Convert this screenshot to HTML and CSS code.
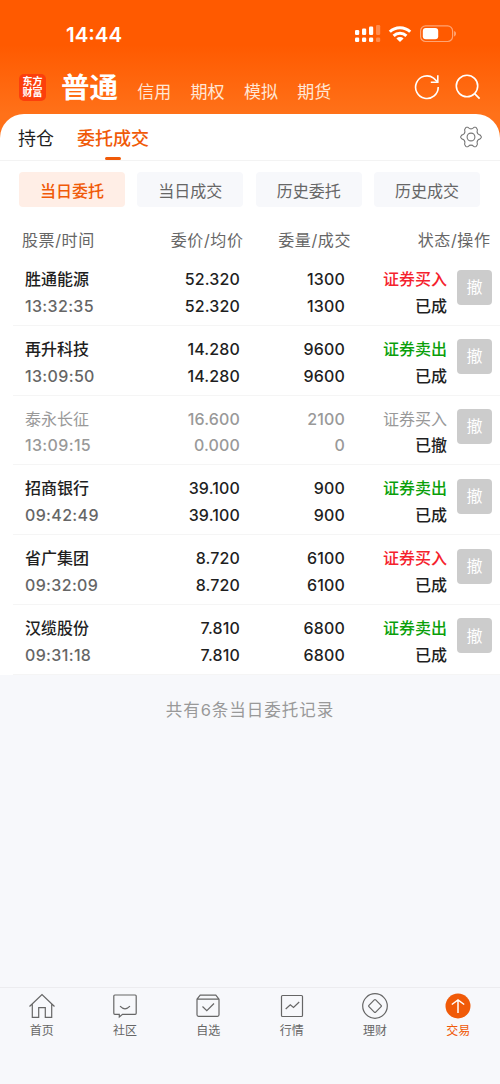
FILE: index.html
```html
<!DOCTYPE html>
<html lang="zh-CN">
<head>
  <meta charset="UTF-8">
  <meta name="viewport" content="width=device-width, initial-scale=1.0">
  <title>委托成交</title>
  <link rel="stylesheet" href="styles.css">
</head>
<body>
  <header>
    <div class="status-bar">
      <div class="time">14:44</div>
      <div class="status-icons">
        <svg class="signal" width="26" height="18" viewBox="0 0 26 18" fill="#fff">
          <rect x="0" y="5" width="4.2" height="5" rx="1.2"/>
          <rect x="7" y="3.5" width="4.2" height="6.5" rx="1.2"/>
          <rect x="14" y="1.5" width="4.2" height="8.5" rx="1.2"/>
          <rect x="21" y="0" width="4.2" height="10" rx="1.2" opacity=".3"/>
          <rect x="0" y="12.5" width="4.2" height="4.5" rx="1.2"/>
          <rect x="7" y="12.5" width="4.2" height="4.5" rx="1.2"/>
          <rect x="14" y="12.5" width="4.2" height="4.5" rx="1.2"/>
          <rect x="21" y="12.5" width="4.2" height="4.5" rx="1.2" opacity=".3"/>
        </svg>
        <svg class="wifi" width="24" height="18" viewBox="0 0 24 18" fill="none" stroke="#fff" stroke-width="3">
          <path d="M1.8 6.8a14.6 14.6 0 0 1 20.4 0"/>
          <path d="M5.6 10.8a9.2 9.2 0 0 1 12.8 0"/>
          <path d="M12 17l-3.6-3.6a5.2 5.2 0 0 1 7.2 0z" fill="#fff" stroke="none"/>
        </svg>
        <svg class="battery" width="37" height="18" viewBox="0 0 37 18">
          <rect x=".6" y=".9" width="32" height="15.6" rx="5" fill="none" stroke="#fff" stroke-opacity=".45" stroke-width="1.2"/>
          <rect x="2.8" y="3.1" width="15.4" height="11.2" rx="3" fill="#fff"/>
          <path d="M34.2 6v5.4c1.2-.5 1.7-1.5 1.7-2.7s-.5-2.2-1.7-2.7z" fill="#fff" fill-opacity=".5"/>
        </svg>
      </div>
    </div>
    <div class="title-bar">
      <div class="logo">东方<br>财富</div>
      <nav>
        <a class="current">普通</a>
        <a>信用</a>
        <a>期权</a>
        <a>模拟</a>
        <a>期货</a>
      </nav>
      <div class="tools">
        <svg width="26" height="26" viewBox="0 0 26 26" fill="none" stroke="#fff" stroke-width="1.6">
          <path d="M24.2 13A11.3 11.3 0 1 1 19.6 4.1L23.5 7.8"/>
          <path d="M23.8 1.2v7h-7"/>
        </svg>
        <svg width="26" height="26" viewBox="0 0 26 26" fill="none" stroke="#fff" stroke-width="1.6">
          <circle cx="12" cy="12" r="10.7"/>
          <path d="M19.6 19.6l5 5"/>
        </svg>
      </div>
    </div>
  </header>

  <main>
    <div class="tabs">
      <a>持仓</a>
      <a class="active">委托成交</a>
      <svg class="gear" width="22" height="22" viewBox="0 0 22 22" fill="none" stroke="#777" stroke-width="1.1" stroke-linejoin="round">
        <path d="M6.500 1.200h1.200q.5 0 .8.500c1 1.600 4 1.600 5 0q.3-.5.8-.5h1.200q.5 0 .8.500l1 1.800q.2.400 0 .9c-.5 1.900.7 3.900 2.500 4.500q.4.100.6.500l.8 1.100q.3.500 0 1l-.8 1.100q-.2.400-.6.500c-1.800.6-3 2.600-2.500 4.500q.2.500 0 .9l-1 1.800q-.3.500-.8.500h-1.200q-.5 0-.8-.5c-1-1.600-4-1.600-5 0q-.3.500-.8.500H6.500q-.5 0-.8-.5l-1-1.800q-.2-.4 0-.9c.5-1.900-.7-3.900-2.500-4.500q-.4-.1-.6-.5l-.8-1.100q-.3-.5 0-1l.8-1.100q.2-.4.600-.5c1.800-.6 3-2.600 2.500-4.500q-.2-.5 0-.9l1-1.800q.3-.5.800-.5z"/>
        <circle cx="11" cy="11" r="3.900"/>
      </svg>
    </div>

    <div class="filters">
      <button class="selected">当日委托</button>
      <button>当日成交</button>
      <button>历史委托</button>
      <button>历史成交</button>
    </div>

    <div class="list-head">
      <span>股票/时间</span>
      <span>委价/均价</span>
      <span>委量/成交</span>
      <span>状态/操作</span>
    </div>

    <div class="orders">
      <div class="order">
        <div class="stock"><b>胜通能源</b><span>13:32:35</span></div>
        <div class="price"><span>52.320</span><span>52.320</span></div>
        <div class="amount"><span>1300</span><span>1300</span></div>
        <div class="state"><span class="buy">证券买入</span><span>已成</span></div>
        <button class="cancel">撤</button>
      </div>
      <div class="order">
        <div class="stock"><b>再升科技</b><span>13:09:50</span></div>
        <div class="price"><span>14.280</span><span>14.280</span></div>
        <div class="amount"><span>9600</span><span>9600</span></div>
        <div class="state"><span class="sell">证券卖出</span><span>已成</span></div>
        <button class="cancel">撤</button>
      </div>
      <div class="order revoked">
        <div class="stock"><b>泰永长征</b><span>13:09:15</span></div>
        <div class="price"><span>16.600</span><span>0.000</span></div>
        <div class="amount"><span>2100</span><span>0</span></div>
        <div class="state"><span>证券买入</span><span class="done">已撤</span></div>
        <button class="cancel">撤</button>
      </div>
      <div class="order">
        <div class="stock"><b>招商银行</b><span>09:42:49</span></div>
        <div class="price"><span>39.100</span><span>39.100</span></div>
        <div class="amount"><span>900</span><span>900</span></div>
        <div class="state"><span class="sell">证券卖出</span><span>已成</span></div>
        <button class="cancel">撤</button>
      </div>
      <div class="order">
        <div class="stock"><b>省广集团</b><span>09:32:09</span></div>
        <div class="price"><span>8.720</span><span>8.720</span></div>
        <div class="amount"><span>6100</span><span>6100</span></div>
        <div class="state"><span class="buy">证券买入</span><span>已成</span></div>
        <button class="cancel">撤</button>
      </div>
      <div class="order">
        <div class="stock"><b>汉缆股份</b><span>09:31:18</span></div>
        <div class="price"><span>7.810</span><span>7.810</span></div>
        <div class="amount"><span>6800</span><span>6800</span></div>
        <div class="state"><span class="sell">证券卖出</span><span>已成</span></div>
        <button class="cancel">撤</button>
      </div>
    </div>
  </main>

  <p class="total">共有6条当日委托记录</p>

  <footer>
    <a>
      <svg width="28" height="28" viewBox="0 0 28 28">
        <path d="M1.500 14.500L14 2.500l12.500 12M4.300 12v13.300h6.400v-9.600h6.600v9.600h6.400V12"/>
      </svg>
      首页
    </a>
    <a>
      <svg width="28" height="28" viewBox="0 0 28 28">
        <path d="M3.800 3h20.400q1 0 1 1v17.300q0 1-1 1H11.500L8.300 25v-2.700H3.800q-1 0-1-1V4q0-1 1-1z"/>
        <path d="M9 14.200q5 5.200 10 0"/>
      </svg>
      社区
    </a>
    <a>
      <svg width="28" height="28" viewBox="0 0 28 28">
        <path d="M3 7.200l3.200-4h15.600l3.200 4v15.600q0 1.500-1.500 1.500h-19Q3 24.300 3 22.800zM3 7.200h22"/>
        <path d="M8.500 14.500l4.300 4.200 7.200-7.200"/>
      </svg>
      自选
    </a>
    <a>
      <svg width="28" height="28" viewBox="0 0 28 28">
        <rect x="3.500" y="3.500" width="21" height="21" rx="1"/>
        <path d="M7.700 17l4.600-4.200 3.200 2.700 5.700-5.500"/>
      </svg>
      行情
    </a>
    <a>
      <svg width="28" height="28" viewBox="0 0 28 28">
        <circle cx="14" cy="14" r="12.300"/>
        <path d="M13.300 7.900q.7-.7 1.400 0l5.400 5.400q.7.700 0 1.400l-5.400 5.400q-.7.700-1.400 0l-5.400-5.400q-.7-.7 0-1.400z"/>
      </svg>
      理财
    </a>
    <a class="on">
      <svg width="28" height="28" viewBox="0 0 28 28">
        <circle class="disc" cx="14" cy="14" r="12.500"/>
        <path class="arrow" d="M14 21V8.200M7.800 12.500L14 8l6.200 4.500"/>
      </svg>
      交易
    </a>
  </footer>
</body>
</html>
```
FILE: styles.css
```css
:root {
  --orange: #f05a08;
  --text: #1f1f1f;
  --gray: #666;
  --light: #f7f8fb;
}

* {
  box-sizing: border-box;
}

body {
  margin: 0;
  height: 1084px;
  display: flex;
  flex-direction: column;
  overflow: hidden;
  font-family: Inter, "Noto Sans CJK SC", sans-serif;
  font-size: 16px;
  color: var(--text);
  background: var(--light);
}

header {
  height: 144px;
  margin-bottom: -30px;
  flex: none;
  color: #fff;
  background: linear-gradient(#ff5a00 0, #ff5a00 45px, #ff7119 114px);
}

.status-bar {
  height: 68px;
  padding: 0 43px 0 66px;
  display: flex;
  align-items: center;
  justify-content: space-between;
}

.time {
  font-size: 20.5px;
  font-weight: 600;
}

.status-icons {
  display: flex;
}

.wifi {
  margin: 0 8px 0 7px;
}

.title-bar {
  display: flex;
  align-items: center;
  height: 38px;
  padding: 0 19px;
}

.logo {
  width: 27px;
  height: 27px;
  padding-top: 2px;
  border-radius: 5px;
  background: #fc3f0c;
  font-size: 10px;
  font-weight: 700;
  line-height: 11.5px;
  text-align: center;
}

nav {
  display: flex;
  align-items: baseline;
  gap: 19.3px;
  margin: 6px 0 0 15px;
  font-size: 17px;
  line-height: 36px;
  color: #ffe6d4;
}

nav .current {
  font-size: 28.5px;
  font-weight: 700;
  color: #fff;
}

.tools {
  display: flex;
  gap: 15px;
  margin-left: auto;
}

main {
  flex: none;
  background: #fff;
  border-radius: 24px 24px 0 0;
}

.tabs {
  display: flex;
  align-items: center;
  height: 47px;
  padding: 0 18px;
  border-bottom: 1px solid #f3f3f3;
  font-size: 18px;
}

.tabs a {
  height: 47px;
  line-height: 50px;
  margin-right: 23px;
}

.tabs .active {
  color: var(--orange);
  font-weight: 500;
}

.tabs .active::after {
  content: "";
  display: block;
  width: 16px;
  height: 3px;
  margin: -7px auto 0;
  border-radius: 2px;
  background: var(--orange);
}

.gear {
  margin-left: auto;
}

.filters {
  display: grid;
  grid-template-columns: repeat(4, 106px);
  justify-content: space-between;
  padding: 11px 20px 0 19px;
}

button {
  border: 0;
  padding: 0;
  font: inherit;
}

.filters button {
  height: 35px;
  border-radius: 4px;
  color: var(--gray);
  background: var(--light);
}

.filters .selected {
  color: var(--orange);
  background: #ffeee6;
  font-weight: 500;
}

.list-head {
  display: grid;
  grid-template-columns: 100px 121.5px 107.5px 139.500px;
  height: 49px;
  padding-left: 22px;
  line-height: 66px;
  letter-spacing: .6px;
  color: var(--gray);
}

.list-head span + span {
  text-align: right;
}

.orders {
  padding-left: 13px;
}

.order {
  display: grid;
  grid-template-columns: 100px 115px 105px 102px 35px;
  height: 69.8px;
  padding: 10px 0 0 12px;
  border-bottom: 1px solid #f5f5f5;
  font-weight: 500;
  line-height: 26.7px;
}

.order div {
  display: flex;
  flex-direction: column;
  text-align: right;
}

.order .stock {
  text-align: left;
}

.stock b {
  font-weight: 500;
}

.stock span {
  letter-spacing: .35px;
  color: var(--gray);
}

.price,
.amount {
  font-weight: 550;
  letter-spacing: .15px;
}

.buy {
  color: #f5222d;
}

.sell {
  color: #0a9f0a;
}

.revoked {
  color: #999;
}

.revoked .stock b {
  font-weight: 400;
}

.revoked .stock span {
  color: #999;
}

.revoked .state span:first-child {
  font-weight: 400;
}

.revoked .done {
  color: var(--text);
}

.cancel {
  width: 35px;
  height: 35px;
  margin: 3.5px 0 0 10px;
  border-radius: 4px;
  color: #fff;
  background: #ccc;
  font-weight: 400;
}

.total {
  margin: 22px 0 0;
  line-height: 26px;
  text-align: center;
  font-size: 16.5px;
  letter-spacing: 1px;
  color: #999;
}

footer {
  display: grid;
  grid-template-columns: repeat(6, 1fr);
  height: 97px;
  margin-top: auto;
  padding-top: 4px;
  border-top: 1px solid #ececef;
}

footer a {
  display: flex;
  flex-direction: column;
  align-items: center;
  font-size: 12px;
  line-height: 21px;
  color: var(--gray);
}

footer svg {
  fill: none;
  stroke: #666;
  stroke-width: 1.2;
}

footer .on {
  color: var(--orange);
}

footer .disc {
  fill: var(--orange);
  stroke: none;
}

footer .arrow {
  stroke: #fff;
  stroke-width: 1.5;
}
```
